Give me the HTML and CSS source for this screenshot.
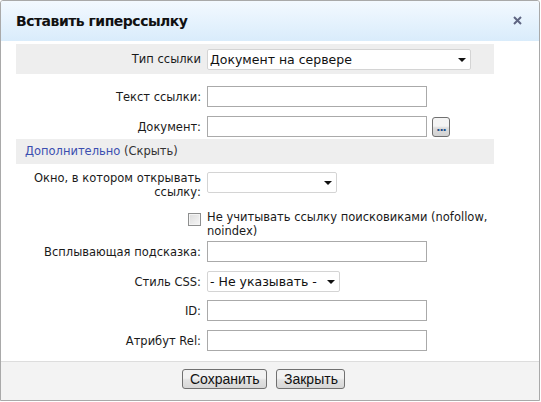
FILE: index.html
```html
<!DOCTYPE html>
<html lang="ru">
<head>
    <meta charset="UTF-8">
    <title>Вставить гиперссылку</title>
    <link rel="stylesheet" href="styles.css">
</head>
<body>
    <div class="dialog">
        <div class="dialog-header">
            <span class="dialog-title">Вставить гиперссылку</span>
            <a href="#" class="dialog-close" title="Закрыть">
                <svg width="9" height="9" viewBox="0 0 9 9">
                    <path d="M1 1L8 8M8 1L1 8" stroke="#5f6582" stroke-width="2"/>
                </svg>
            </a>
        </div>

        <div class="dialog-body">
            <div class="row band band-type">
                <label class="row-label">Тип ссылки</label>
                <span class="select-wrap wide">
                    <select class="select big">
                        <option>Документ на сервере</option>
                    </select>
                </span>
            </div>

            <div class="row row-text">
                <label class="row-label">Текст ссылки:</label>
                <input type="text" class="field">
            </div>
            <div class="row row-doc">
                <label class="row-label">Документ:</label>
                <div class="field-group">
                    <input type="text" class="field">
                    <button class="browse-btn">...</button>
                </div>
            </div>

            <div class="band band-more">
                <a href="#" class="more-link">Дополнительно</a> (Скрыть)
            </div>

            <div class="row row-top row-window">
                <label class="row-label">Окно, в котором открывать ссылку:</label>
                <span class="select-wrap window">
                    <select class="select">
                        <option></option>
                    </select>
                </span>
            </div>

            <div class="row row-top row-check">
                <span class="row-label"><span class="checkbox"></span></span>
                <span class="check-text">Не учитывать ссылку поисковиками (nofollow, noindex)</span>
            </div>

            <div class="row row-tip">
                <label class="row-label">Всплывающая подсказка:</label>
                <input type="text" class="field">
            </div>
            <div class="row row-css">
                <label class="row-label">Стиль CSS:</label>
                <span class="select-wrap css">
                    <select class="select big">
                        <option>- Не указывать -</option>
                    </select>
                </span>
            </div>
            <div class="row row-id">
                <label class="row-label">ID:</label>
                <input type="text" class="field">
            </div>
            <div class="row row-rel">
                <label class="row-label">Атрибут Rel:</label>
                <input type="text" class="field">
            </div>
        </div>

        <div class="dialog-footer">
            <button class="btn save-btn">Сохранить</button>
            <button class="btn close-btn">Закрыть</button>
        </div>
    </div>
</body>
</html>
```

FILE: styles.css
```css
body {
    margin: 0;
    padding: 0;
    background-color: #fff;
    font-family: "DejaVu Sans", Verdana, sans-serif;
    font-size: 11.5px;
    color: #1a1a1a;
}

.dialog {
    width: 538px;
    height: 399px;
    border: 1px solid #a9a9a9;
    border-radius: 3px 3px 0 0;
    display: flex;
    flex-direction: column;
    overflow: hidden;
}

.dialog-header {
    height: 40px;
    flex: none;
    box-sizing: border-box;
    padding: 0 17px 0 15px;
    display: flex;
    align-items: center;
    justify-content: space-between;
    background: linear-gradient(#f3f9ff, #d9ecfb);
}

.dialog-title {
    font-weight: bold;
    font-size: 14px;
    color: #111;
    letter-spacing: -0.5px;
    margin-top: -1px;
}

.dialog-close {
    display: flex;
    margin-top: -1px;
}

.dialog-body {
    flex: 1;
    padding: 3px 0 0 15px;
    width: 478px;
}

.row {
    display: grid;
    grid-template-columns: 185px 287px;
    column-gap: 6px;
    align-items: center;
}

.row > :last-child {
    justify-self: start;
}

.row-top {
    align-items: start;
}

.row-label {
    text-align: right;
    line-height: 14px;
}

.band {
    background-color: #eee;
}

.band-type {
    height: 30px;
}

.band-more {
    margin-top: 2px;
    height: 25px;
    line-height: 25px;
    padding-left: 9px;
    color: #333;
}

.more-link {
    color: #3b4eb0;
    text-decoration: none;
}

.row-text { margin-top: 12px; }
.row-doc { margin-top: 9px; }
.row-window { margin-top: 7px; }
.row-check { margin-top: 11px; }
.row-tip { margin-top: 3px; }
.row-css { margin-top: 9px; }
.row-id { margin-top: 8px; }
.row-rel { margin-top: 9px; }

.field {
    width: 220px;
    height: 21px;
    box-sizing: border-box;
    border: 1px solid #aaa;
    margin: 0;
    padding: 1px 3px;
    font: inherit;
}

.field-group {
    display: flex;
    align-items: center;
    gap: 5px;
}

.browse-btn {
    width: 18px;
    height: 20px;
    padding: 0 0 3px;
    box-sizing: border-box;
    border: 1px solid #707070;
    border-radius: 3px;
    background: linear-gradient(#f4f4f4 45%, #dddddd 55%, #d2d2d2);
    font: bold 11px "DejaVu Sans", sans-serif;
    line-height: 11px;
    color: #1e4f8a;
    display: flex;
    align-items: flex-end;
    justify-content: center;
    letter-spacing: -1px;
}

.select-wrap {
    position: relative;
    display: inline-block;
    height: 21px;
}

.select-wrap::after {
    content: "";
    position: absolute;
    right: 5px;
    top: 9px;
    border-left: 4px solid transparent;
    border-right: 4px solid transparent;
    border-top: 4px solid #111;
    pointer-events: none;
}

.select {
    -webkit-appearance: none;
    appearance: none;
    height: 21px;
    box-sizing: border-box;
    border: 1px solid #d4d4d4;
    border-radius: 2px;
    background: #fff;
    margin: 0;
    padding: 0 0 0 2px;
    font: inherit;
    color: #111;
    display: block;
}

.select.big {
    font-size: 12.5px;
}

.wide .select { width: 264px; }
.window .select { width: 130px; }
.window { margin-top: 1px; }
.css .select { width: 133px; }

.checkbox {
    display: inline-block;
    width: 11px;
    height: 11px;
    margin: 3px 0 0;
    border: 1px solid #8e8f8f;
    background: linear-gradient(135deg, #dcdcdc, #f6f6f6);
    box-shadow: inset 0 0 0 1px #f4f4f4;
}

.check-text {
    line-height: 14px;
    margin-right: -8px;
}

.dialog-footer {
    height: 39px;
    flex: none;
    box-sizing: border-box;
    border-top: 1px solid #ddd;
    background-color: #f3f3f3;
    display: flex;
    justify-content: center;
    align-items: flex-start;
    gap: 9px;
    padding: 7px 13px 0 0;
}

.btn {
    height: 20px;
    padding: 0 7px;
    border: 1px solid #707070;
    border-radius: 3px;
    background: linear-gradient(#f2f2f2 45%, #e2e2e2 55%, #d6d6d6);
    font-family: "Liberation Sans", Arial, sans-serif;
    font-size: 14px;
    color: #111;
    line-height: 16px;
}

.save-btn { width: 85px; }
.close-btn { width: 69px; }
```
